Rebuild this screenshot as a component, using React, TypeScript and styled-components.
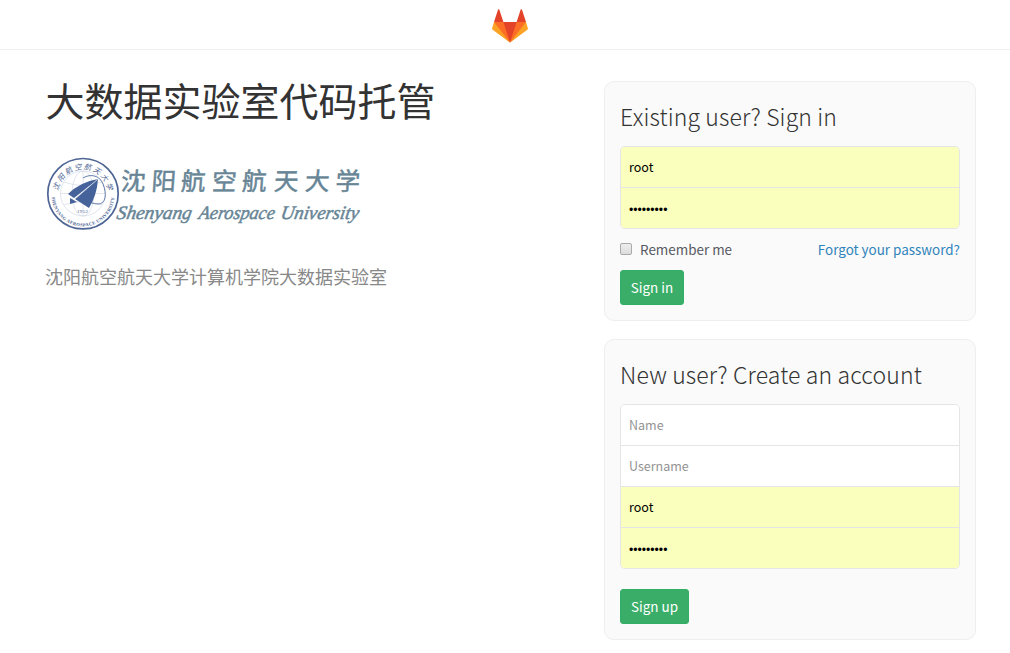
import React from 'react';
import styled, { createGlobalStyle } from 'styled-components';

const GlobalStyle = createGlobalStyle`
  * { box-sizing: border-box; }
  body {
    margin: 0;
    background: #fff;
    color: #333;
    font-family: "Noto Sans CJK SC", "Open Sans", sans-serif;
    overflow: hidden;
  }
`;

const Header = styled.header`
  height: 50px;
  padding: 8px 0 0 10px;
  display: flex;
  justify-content: center;
  align-items: flex-start;
  border-bottom: 1px solid #eee;
`;

const Main = styled.main`
  display: grid;
  grid-template-columns: 559px 372px;
  padding: 31px 34px 0 45px;
`;

const Title = styled.h1`
  margin: -4px 0 0 0.5px;
  font-size: 39px;
  line-height: 44px;
  font-weight: 400;
`;

const Description = styled.p`
  margin: 29px 0 0;
  font-size: 18px;
  line-height: 26px;
  color: #888;
`;

const BrandLogo = styled.svg`
  display: block;
  margin-top: 31px;
  overflow: visible;
`;

const Side = styled.div`
  display: flex;
  flex-direction: column;
  gap: 18px;
`;

const Card = styled.section<{ $h: number }>`
  height: ${(p) => p.$h}px;
  padding: 15px;
  background: #fafafa;
  border: 1px solid #eee;
  border-radius: 10px;
`;

const CardTitle = styled.h3`
  margin: 4px 0 15px;
  font-size: 23px;
  line-height: 30px;
  font-weight: 300;
  white-space: nowrap;
  letter-spacing: 0.13px;
`;

const Fields = styled.div`
  border: 1px solid #e5e5e5;
  border-radius: 5px;
  overflow: hidden;
`;

const Field = styled.input<{ $filled?: boolean }>`
  display: block;
  width: 100%;
  height: 41px;
  padding: 0 8px 2px;
  border: 0;
  border-bottom: 1px solid #e5e5e5;
  outline: 0;
  background: ${(p) => (p.$filled ? '#faffbd' : '#fff')};
  color: #000;
  font: 400 12.5px/20px "Noto Sans CJK SC", sans-serif;
  &::placeholder { color: #939393; opacity: 1; }
  &:last-child { border-bottom: 0; height: 40px; }
  &[type='password'] {
    padding: 3px 8px 0;
    font: 400 12.2px/20px "Liberation Sans", sans-serif;
  }
`;

const Options = styled.div`
  display: flex;
  align-items: center;
  height: 20px;
  margin: 10px 0 11px;
  font-size: 13.45px;
  line-height: 20px;
  color: #555860;
`;

const Check = styled.span`
  width: 12px;
  height: 12px;
  margin-right: 8px;
  border: 1px solid #a9a9a9;
  border-radius: 2px;
  background: linear-gradient(#eee, #dcdcdc);
`;

const Forgot = styled.a`
  margin-left: auto;
  color: #3084bb;
`;

const Button = styled.button<{ $w: number; $top?: number }>`
  display: block;
  width: ${(p) => p.$w}px;
  height: 35px;
  margin-top: ${(p) => p.$top ?? 0}px;
  padding: 0 0 2px;
  border: 1px solid #31af64;
  border-radius: 3px;
  background: #3aae69;
  color: #fff;
  font: 400 13.45px/20px "Noto Sans CJK SC", sans-serif;
`;

const Tanuki = () => (
  <svg width="36" height="36" viewBox="0 0 36 36">
    <path fill="#e24329" d="M2 14l9.38 9v-9l-4-12.28c-.205-.632-1.176-.632-1.38 0z" />
    <path fill="#e24329" d="M34 14l-9.38 9v-9l4-12.28c.205-.632 1.176-.632 1.38 0z" />
    <path fill="#e24329" d="M18 34.38L3 14h30z" />
    <path fill="#fc6d26" d="M18 34.38L11.38 14H2l4 11z" />
    <path fill="#fc6d26" d="M18 34.38L24.62 14H34l-4 11z" />
    <path fill="#fca326" d="M2 14L.1 20.16c-.18.565 0 1.2.5 1.56L18 34.38z" />
    <path fill="#fca326" d="M34 14l1.9 6.16c.18.565 0 1.2-.5 1.56L18 34.38z" />
  </svg>
);

const words = [
  { text: 'Shenyang', x: 0, width: 75 },
  { text: 'Aerospace', x: 82, width: 76 },
  { text: 'University', x: 164, width: 78 },
];

const University = () => (
  <BrandLogo width="320" height="82" viewBox="45 152 320 82">
    <defs>
      <path id="arcTop" d="M58.4 191a24.8 24.8 0 0 1 49.2 0" />
      <path id="arcBottom" d="M51.6 195a31.4 31.4 0 0 0 62.8 0" />
    </defs>
    <circle cx="83" cy="193.7" r="35.2" fill="#fff" stroke="#4d6494" strokeWidth="1.7" />
    <g fill="none" stroke="#d3dae6" strokeWidth=".7">
      <circle cx="83" cy="193.5" r="22.5" />
      <ellipse cx="83" cy="193.5" rx="11" ry="22.5" />
      <path d="M83 171v45M60.5 193.5h45M64 182q19 7 38 0M64 205q19-7 38 0" />
    </g>
    <path
      d="M83 178c8-5 17-2 20 6 4 10 3 20-5 20-5 0-9-2-13-5"
      fill="none" stroke="#667fac" strokeWidth="1"
    />
    <path fill="#46629a" d="M98 179q-18 3-30 15l6 4zM98 179q-1 16-9 29l-14-9zM70 198l7 4-7 2z" />
    <path d="M98 179l-23 20" fill="none" stroke="#cdd7e8" strokeWidth=".8" />
    <g fill="#4b6391">
      <text fontFamily="Noto Sans CJK SC" fontSize="7.4" fontStyle="italic">
        <textPath href="#arcTop" startOffset="0">沈 阳 航 空 航 天 大 学</textPath>
      </text>
      <text fontFamily="Liberation Serif" fontWeight="700" fontSize="4.6">
        <textPath href="#arcBottom" startOffset="2" textLength="94">SHENYANG AEROSPACE UNIVERSITY</textPath>
      </text>
      <text x="77" y="213" fontFamily="Liberation Serif" fontSize="5" textLength="11">1952</text>
    </g>
    <g fill="#688596" stroke="#688596">
      <text
        x="0 30.5 60 91 121 153 184 214.5" y="0" fontFamily="Noto Sans CJK SC" fontSize="24.5"
        strokeWidth=".5" transform="translate(120.5 189.5) skewX(-4)"
      >沈阳航空航天大学</text>
      <g
        fontFamily="Liberation Serif" fontStyle="italic" fontSize="19"
        strokeWidth=".5" transform="translate(116 218.5) skewX(-10)"
      >
        {words.map((w) => (
          <text key={w.text} x={w.x} y="0" textLength={w.width} lengthAdjust="spacingAndGlyphs">
            {w.text}
          </text>
        ))}
      </g>
    </g>
  </BrandLogo>
);

export default function App() {
  return (
    <>
      <GlobalStyle />
      <Header><Tanuki /></Header>
      <Main>
        <div>
          <Title>大数据实验室代码托管</Title>
          <University />
          <Description>沈阳航空航天大学计算机学院大数据实验室</Description>
        </div>
        <Side>
          <Card $h={240}>
            <CardTitle>Existing user? Sign in</CardTitle>
            <Fields>
              <Field $filled defaultValue="root" />
              <Field $filled type="password" defaultValue="password1" />
            </Fields>
            <Options>
              <Check />
              <span>Remember me</span>
              <Forgot>Forgot your password?</Forgot>
            </Options>
            <Button $w={64}>Sign in</Button>
          </Card>
          <Card $h={301}>
            <CardTitle>New user? Create an account</CardTitle>
            <Fields>
              <Field placeholder="Name" />
              <Field placeholder="Username" />
              <Field $filled defaultValue="root" />
              <Field $filled type="password" defaultValue="password1" />
            </Fields>
            <Button $w={69} $top={20}>Sign up</Button>
          </Card>
        </Side>
      </Main>
    </>
  );
}
